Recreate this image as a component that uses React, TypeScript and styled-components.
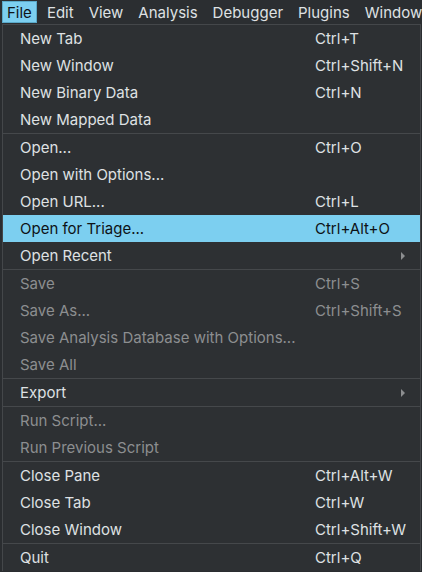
import React from "react";
import styled, { createGlobalStyle } from "styled-components";

const Global = createGlobalStyle`
  html, body { margin: 0; padding: 0; background: #2a2d30; }
  body { font-family: Inter, "Noto Sans", sans-serif; -webkit-font-smoothing: antialiased; }
`;

const Page = styled.div`
  width: 422px;
  height: 572px;
  background: #2a2d30;
  overflow: hidden;
  display: flex;
  flex-direction: column;
`;

const MenuBar = styled.div`
  height: 24px;
  display: flex;
  align-items: stretch;
  padding-left: 2px;
  background: #2b2e31;
  white-space: nowrap;
`;

const BarItem = styled.div<{ $active?: boolean }>`
  display: flex;
  align-items: center;
  padding: 0 4px;
  margin-top: 1px;
  margin-right: 5px;
  height: 22px;
  font-size: 15px;
  color: ${(p) => (p.$active ? "#101418" : "#dfe1e3")};
  background: ${(p) => (p.$active ? "#7ccff0" : "transparent")};
  border: 1px solid ${(p) => (p.$active ? "#5aa9c9" : "transparent")};
  box-sizing: border-box;
  flex: 0 0 auto;
`;

const Menu = styled.div`
  margin-left: 2px;
  width: 419px;
  box-sizing: border-box;
  border: 1px solid #44474a;
  border-bottom: none;
  background: #2d3033;
  display: flex;
  flex-direction: column;
`;

const Row = styled.div<{ $active?: boolean; $disabled?: boolean }>`
  height: 27px;
  flex: 0 0 27px;
  display: grid;
  grid-template-columns: 295px 1fr 20px;
  align-items: center;
  padding-left: 17px;
  font-size: 15px;
  color: ${(p) => (p.$active ? "#0e1216" : p.$disabled ? "#8c8e90" : "#dfe1e3")};
  background: ${(p) => (p.$active ? "#7ccff0" : "transparent")};
  white-space: nowrap;
`;

const Label = styled.span``;
const Shortcut = styled.span``;

const Arrow = styled.span`
  width: 0;
  height: 0;
  border-top: 4px solid transparent;
  border-bottom: 4px solid transparent;
  border-left: 4px solid #8c8e90;
  justify-self: start;
  margin-left: 1px;
`;

const Separator = styled.div`
  height: 1px;
  flex: 0 0 1px;
  background: #45484b;
`;

type Item =
  | { sep: true }
  | { label: string; shortcut?: string; disabled?: boolean; active?: boolean; sub?: boolean };

const items: Item[] = [
  { label: "New Tab", shortcut: "Ctrl+T" },
  { label: "New Window", shortcut: "Ctrl+Shift+N" },
  { label: "New Binary Data", shortcut: "Ctrl+N" },
  { label: "New Mapped Data" },
  { sep: true },
  { label: "Open...", shortcut: "Ctrl+O" },
  { label: "Open with Options..." },
  { label: "Open URL...", shortcut: "Ctrl+L" },
  { label: "Open for Triage...", shortcut: "Ctrl+Alt+O", active: true },
  { label: "Open Recent", sub: true },
  { sep: true },
  { label: "Save", shortcut: "Ctrl+S", disabled: true },
  { label: "Save As...", shortcut: "Ctrl+Shift+S", disabled: true },
  { label: "Save Analysis Database with Options...", disabled: true },
  { label: "Save All", disabled: true },
  { sep: true },
  { label: "Export", sub: true },
  { sep: true },
  { label: "Run Script...", disabled: true },
  { label: "Run Previous Script", disabled: true },
  { sep: true },
  { label: "Close Pane", shortcut: "Ctrl+Alt+W" },
  { label: "Close Tab", shortcut: "Ctrl+W" },
  { label: "Close Window", shortcut: "Ctrl+Shift+W" },
  { sep: true },
  { label: "Quit", shortcut: "Ctrl+Q" },
];

const bar = ["File", "Edit", "View", "Analysis", "Debugger", "Plugins", "Window"];

export default function App() {
  return (
    <Page>
      <Global />
      <MenuBar>
        {bar.map((b, i) => (
          <BarItem key={b} $active={i === 0}>
            {b}
          </BarItem>
        ))}
      </MenuBar>
      <Menu>
        {items.map((it, i) =>
          "sep" in it ? (
            <Separator key={i} />
          ) : (
            <Row key={i} $active={it.active} $disabled={it.disabled}>
              <Label>{it.label}</Label>
              <Shortcut>{it.shortcut ?? ""}</Shortcut>
              {it.sub ? <Arrow /> : <span />}
            </Row>
          )
        )}
      </Menu>
    </Page>
  );
}
